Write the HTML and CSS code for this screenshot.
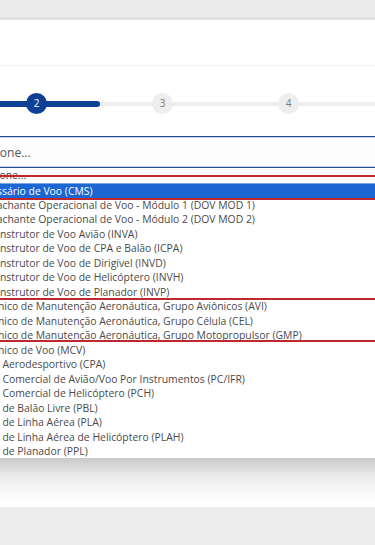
FILE: index.html
```html
<!DOCTYPE html>
<html lang="pt-BR">
<head>
    <meta charset="UTF-8">
    <title>Licenças</title>
    <link rel="stylesheet" href="styles.css">
</head>
<body>
    <div id="topbar"></div>
    <div id="header"></div>
    <div id="steps">
        <div class="step done">1</div>
        <div class="step current">2</div>
        <div class="step">3</div>
        <div class="step">4</div>
    </div>
    <div id="select">Selecione...</div>
    <div id="list">
        <div class="opt">Selecione...</div>
        <div class="opt selected">Comissário de Voo (CMS)</div>
        <div class="opt">Despachante Operacional de Voo - Módulo 1 (DOV MOD 1)</div>
        <div class="opt">Despachante Operacional de Voo - Módulo 2 (DOV MOD 2)</div>
        <div class="opt inst">Instrutor de Voo Avião (INVA)</div>
        <div class="opt inst">Instrutor de Voo de CPA e Balão (ICPA)</div>
        <div class="opt inst">Instrutor de Voo de Dirigível (INVD)</div>
        <div class="opt inst">Instrutor de Voo de Helicóptero (INVH)</div>
        <div class="opt inst">Instrutor de Voo de Planador (INVP)</div>
        <div class="opt">Mecânico de Manutenção Aeronáutica, Grupo Aviônicos (AVI)</div>
        <div class="opt">Mecânico de Manutenção Aeronáutica, Grupo Célula (CEL)</div>
        <div class="opt">Mecânico de Manutenção Aeronáutica, Grupo Motopropulsor (GMP)</div>
        <div class="opt">Mecânico de Voo (MCV)</div>
        <div class="opt">Piloto Aerodesportivo (CPA)</div>
        <div class="opt">Piloto Comercial de Avião/Voo Por Instrumentos (PC/IFR)</div>
        <div class="opt">Piloto Comercial de Helicóptero (PCH)</div>
        <div class="opt">Piloto de Balão Livre (PBL)</div>
        <div class="opt">Piloto de Linha Aérea (PLA)</div>
        <div class="opt">Piloto de Linha Aérea de Helicóptero (PLAH)</div>
        <div class="opt">Piloto de Planador (PPL)</div>
        <div class="mark mark-one"></div>
        <div class="mark mark-two"></div>
    </div>
    <div id="shade"></div>
    <div id="footer"></div>
</body>
</html>
```

FILE: styles.css
```css
*{
    margin: 0;
    padding: 0;
    box-sizing: border-box;
}
html,body{
    width: 375px;
    height: 545px;
    overflow: hidden;
    background: #ffffff;
    font-family: "Open Sans", "Liberation Sans", sans-serif;
}
#topbar{
    height: 20px;
    background: #ececec;
    border-bottom: 3px solid #e4e4e4;
}
#header{
    height: 46px;
    border-bottom: 1px solid #f1f1f1;
}
#steps{
    position: relative;
    display: flex;
    gap: 105px;
    height: 21px;
    margin: 27px 0 0 -100px;
    width: 600px;
}
#steps::before{
    content: "";
    position: absolute;
    left: 0;
    right: 0;
    top: 9px;
    height: 4px;
    background: #eeeeee;
}
#steps::after{
    content: "";
    position: absolute;
    left: 0;
    width: 200px;
    top: 8px;
    height: 6px;
    border-radius: 3px;
    background: #0d3f94;
}
.step{
    position: relative;
    z-index: 1;
    width: 21px;
    height: 21px;
    border-radius: 50%;
    background: #eeeeee;
    color: #7a7a7a;
    font-size: 10px;
    line-height: 21px;
    text-align: center;
}
.step.done,.step.current{
    background: #0d3f94;
    color: #ffffff;
}
#select{
    height: 32px;
    margin: 22px -10px 0 -40px;
    padding: 3px 0 0 7px;
    border: 1px solid #28498a;
    box-shadow: inset 0 0 0 1px #c3d2ee;
    background: linear-gradient(#ffffff, #fbfbfd);
    color: #555555;
    font-size: 12px;
    line-height: 26px;
}
#list{
    position: relative;
    height: 290px;
    margin-left: -28px;
    color: #4a4a4a;
    font-size: 10.4px;
    background: #ffffff;
}
.opt{
    height: 14.5px;
    line-height: 14.5px;
    white-space: nowrap;
}
.opt:first-child{
    height: 15px;
}
.opt.selected{
    background: #1b66d3;
    color: #ffffff;
    border-top: 1px solid #7aa6e6;
}
.opt.inst{
    padding-left: 25px;
}
.mark{
    position: absolute;
    left: 10px;
    right: -20px;
    border: 2px solid #c2272d;
}
.mark-one{
    top: 7px;
    height: 25px;
}
.mark-two{
    top: 130px;
    height: 44px;
}
#shade{
    height: 49px;
    background: linear-gradient(#c9c9c9, #e9e9e9 35%, #fbfbfb 75%, #ffffff);
}
#footer{
    height: 40px;
    background: #eeeded;
}
```
